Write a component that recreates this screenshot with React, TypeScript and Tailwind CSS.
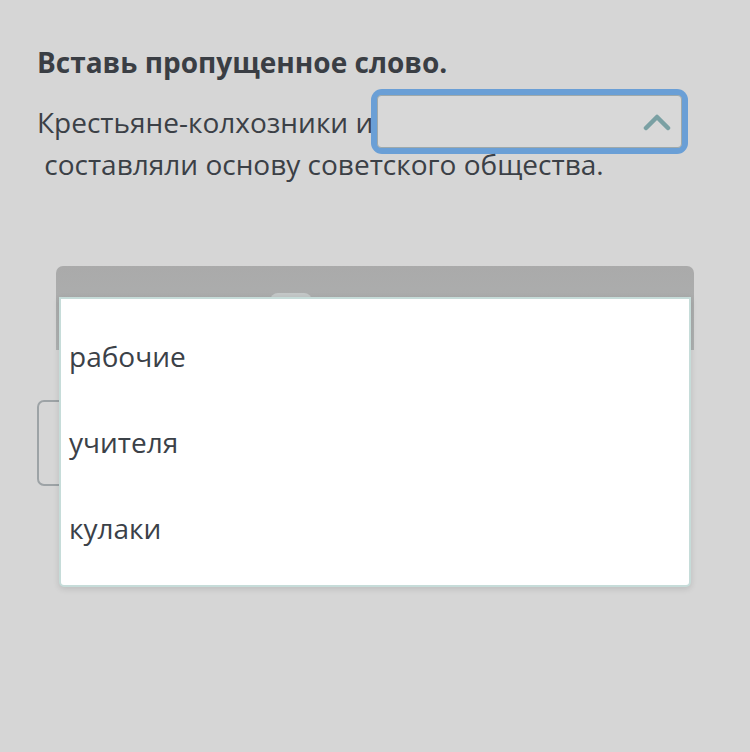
// Экран задания «вставь пропущенное слово» с раскрытым списком вариантов.
const OPTIONS = ["рабочие", "учителя", "кулаки"];

function ChevronUp() {
  return (
    <svg width="28" height="20" viewBox="0 0 28 20" className="block">
      <path d="M3 16 L14 5 L25 16" fill="none" stroke="#7aa0a3" strokeWidth="4.5" strokeLinecap="round" strokeLinejoin="round" />
    </svg>
  );
}

export default function App() {
  return (
    <div
      className="relative h-[752px] w-[750px] overflow-hidden bg-[#d6d6d6] text-[#3b4046]"
      style={{ fontFamily: '"Open Sans", "Noto Sans", sans-serif' }}
    >
      <div className="flex flex-col px-[37px] pt-[42px]">
        <h2 className="text-[28px] font-bold leading-[40px] text-[#3a3e44]">Вставь пропущенное слово.</h2>
        <p className="mt-[20px] text-[28px] leading-[40px]">
          Крестьяне-колхозники и
          <span className="-mt-[18px] -mb-[10px] -ml-[2px] inline-flex h-[65px] w-[317px] items-center rounded-[11px] bg-[#6a9fd6] p-[6px] align-middle">
            <span className="flex h-full w-full items-center justify-end rounded-[4px] border border-[#9ea9ab] bg-[#d8d8d8] pr-[10px]">
              <ChevronUp />
            </span>
          </span>
          <br />
          &nbsp;составляли основу советского общества.
        </p>

        {/* то, что лежит под списком */}
        <div className="mx-[19px] mt-[82px] h-[84px] rounded-t-[7px] bg-gradient-to-b from-[#aaaaaa] to-[#aeb1b1]" />
        <div className="mt-[50px] h-[86px] w-[300px] rounded-[7px] border-2 border-[#9da3a6]" />
      </div>

      <div className="absolute left-[270px] top-[293px] h-[8px] w-[42px] rounded-t-full bg-[#c4c8c8]" />

      <ul className="absolute left-[59px] top-[297px] w-[632px] rounded-b-[5px] border-2 border-[#c6dcd9] bg-white pt-[14px] pb-[14px] shadow-[0_2px_6px_rgba(0,0,0,0.12)]">
        {OPTIONS.map((o) => (
          <li key={o} className="flex h-[86px] items-center pl-[8px] text-[28px] text-[#3b4148]">
            {o}
          </li>
        ))}
      </ul>
    </div>
  );
}
